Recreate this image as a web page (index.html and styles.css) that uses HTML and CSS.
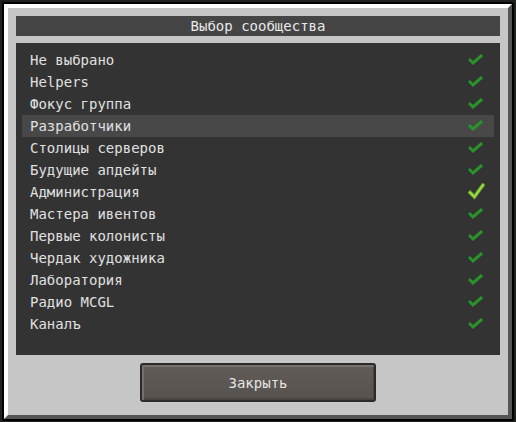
FILE: index.html
```html
<!DOCTYPE html>
<html lang="ru">
<head>
<meta charset="utf-8">
<link rel="stylesheet" href="styles.css">
</head>
<body>
<div class="frame">
  <div class="panel">
    <div class="title">Выбор сообщества</div>
    <div class="list">
      <div class="row"><span>Не выбрано</span><svg class="check" viewBox="0 0 16 12"><polyline points="2,6 5,9 13,2"/></svg></div>
      <div class="row"><span>Helpers</span><svg class="check" viewBox="0 0 16 12"><polyline points="2,6 5,9 13,2"/></svg></div>
      <div class="row"><span>Фокус группа</span><svg class="check" viewBox="0 0 16 12"><polyline points="2,6 5,9 13,2"/></svg></div>
      <div class="row active"><span>Разработчики</span><svg class="check" viewBox="0 0 16 12"><polyline points="2,6 5,9 13,2"/></svg></div>
      <div class="row"><span>Столицы серверов</span><svg class="check" viewBox="0 0 16 12"><polyline points="2,6 5,9 13,2"/></svg></div>
      <div class="row"><span>Будущие апдейты</span><svg class="check" viewBox="0 0 16 12"><polyline points="2,6 5,9 13,2"/></svg></div>
      <div class="row"><span>Администрация</span><svg class="check big" viewBox="0 0 16 16"><polyline class="o" points="2,9 6,13 14,2"/><polyline class="i" points="2,9 6,13 14,2"/></svg></div>
      <div class="row"><span>Мастера ивентов</span><svg class="check" viewBox="0 0 16 12"><polyline points="2,6 5,9 13,2"/></svg></div>
      <div class="row"><span>Первые колонисты</span><svg class="check" viewBox="0 0 16 12"><polyline points="2,6 5,9 13,2"/></svg></div>
      <div class="row"><span>Чердак художника</span><svg class="check" viewBox="0 0 16 12"><polyline points="2,6 5,9 13,2"/></svg></div>
      <div class="row"><span>Лаборатория</span><svg class="check" viewBox="0 0 16 12"><polyline points="2,6 5,9 13,2"/></svg></div>
      <div class="row"><span>Радио MCGL</span><svg class="check" viewBox="0 0 16 12"><polyline points="2,6 5,9 13,2"/></svg></div>
      <div class="row"><span>Каналъ</span><svg class="check" viewBox="0 0 16 12"><polyline points="2,6 5,9 13,2"/></svg></div>
    </div>
    <div class="actions">
      <button class="btn">Закрыть</button>
    </div>
  </div>
</div>
</body>
</html>
```
FILE: styles.css
```css
html, body {
  margin: 0;
  padding: 0;
}
body {
  width: 516px;
  height: 422px;
  background: #1f211f;
  font-family: "DejaVu Sans Mono", "Liberation Mono", monospace;
  font-size: 14px;
  color: #e0e0e0;
  overflow: hidden;
}
.frame {
  box-sizing: border-box;
  margin: 2px 0 0 2px;
  width: 512px;
  height: 419px;
  border: 2px solid #000;
  border-radius: 2px;
}
.panel {
  box-sizing: border-box;
  height: 100%;
  background: #c6c6c6;
  border-left: 4px solid #fff;
  border-top: 4px solid #fff;
  border-right: 4px solid #555;
  border-bottom: 4px solid #555;
  padding: 8px 8px 13px 8px;
  display: flex;
  flex-direction: column;
}
.title {
  height: 20px;
  line-height: 20px;
  background: #454545;
  text-align: center;
  color: #e8e8e8;
}
.list {
  margin-top: 7px;
  height: 312px;
  background: #333;
  box-sizing: border-box;
  padding: 6px 6px;
  display: flex;
  flex-direction: column;
}
.row {
  height: 22px;
  line-height: 22px;
  padding: 0 10px 0 8px;
  display: flex;
  justify-content: space-between;
  align-items: center;
}
.row.active {
  background: #484848;
}
.check {
  width: 16px;
  height: 12px;
}
.check polyline {
  fill: none;
  stroke: #2a922a;
  stroke-width: 3;
  stroke-linecap: square;
  stroke-linejoin: miter;
}
.check.big {
  width: 17px;
  height: 17px;
  margin-top: -2px;
  margin-right: -1px;
}
.check.big .o {
  stroke: #5f9a26;
  stroke-width: 3.6;
}
.check.big .i {
  stroke: #9bd84a;
  stroke-width: 2;
}
.actions {
  margin-top: 8px;
  display: flex;
  justify-content: center;
}
.btn {
  box-sizing: border-box;
  width: 236px;
  height: 39px;
  background: linear-gradient(#615c58, #57524e);
  border: 2px solid #2e2a2a;
  border-radius: 3px;
  box-shadow: inset 2px 2px 0 #77716d, inset -1px -2px 0 #4a4542;
  font-family: "DejaVu Sans Mono", "Liberation Mono", monospace;
  font-size: 14px;
  color: #e4e4e4;
  padding: 0;
}
```
